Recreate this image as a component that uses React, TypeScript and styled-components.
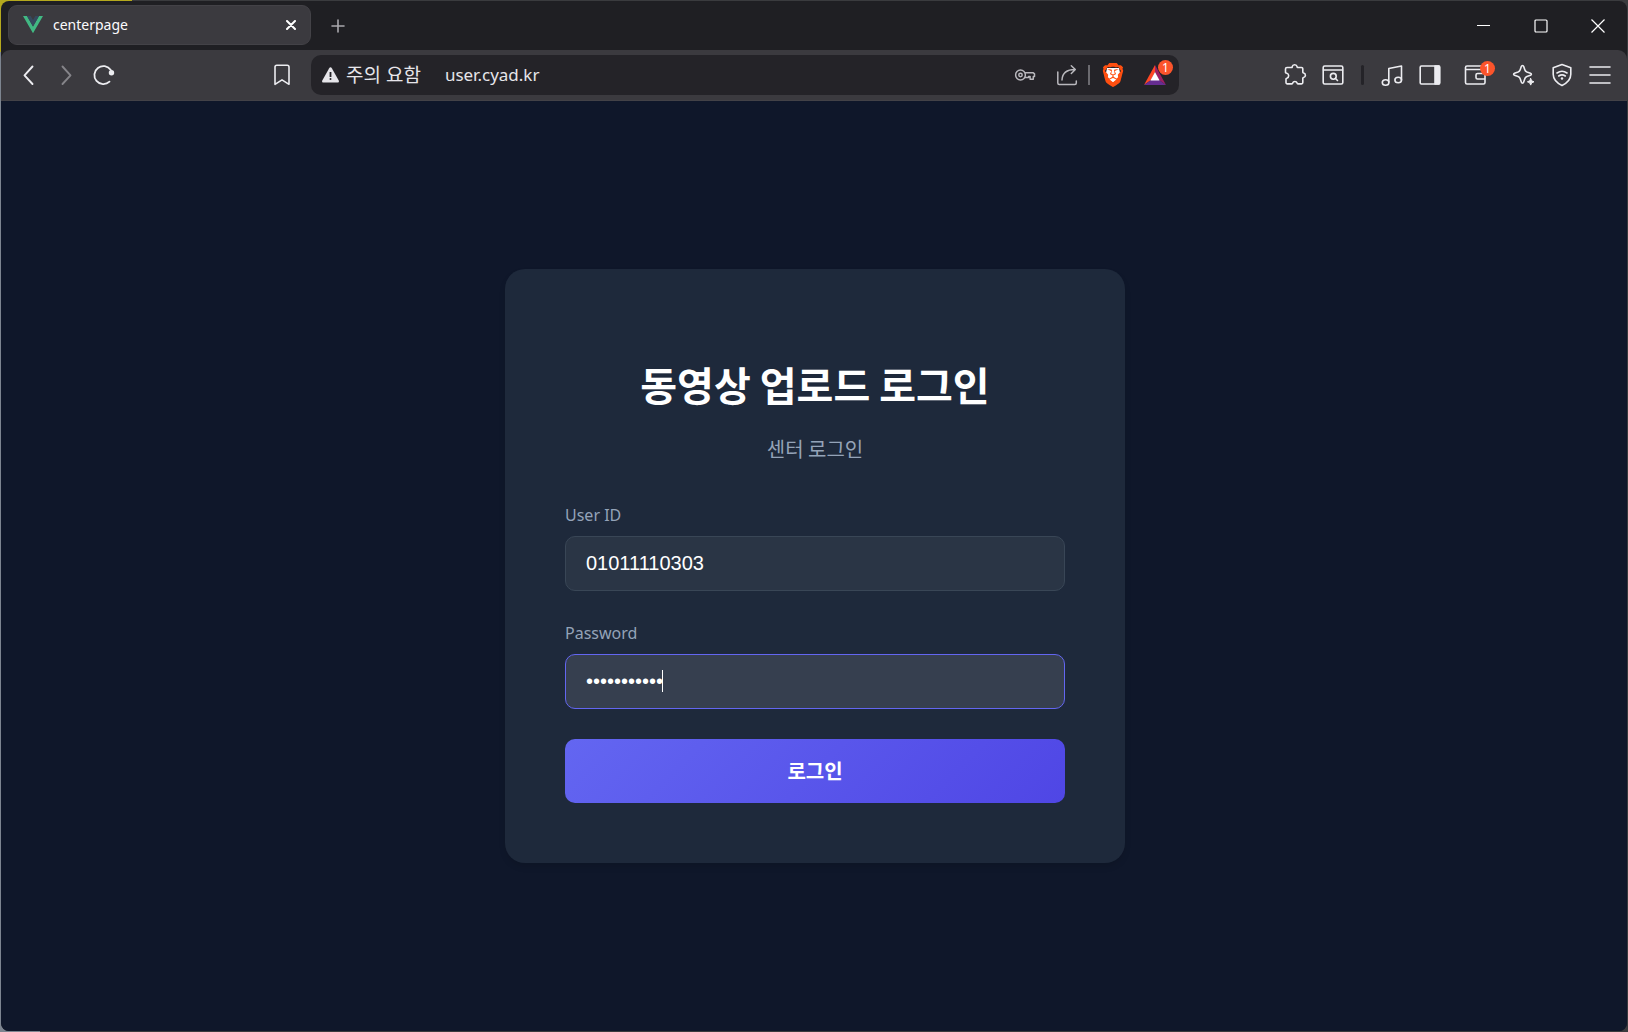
import React, { useState } from "react";
import styled, { createGlobalStyle, css } from "styled-components";
import { SiBrave } from "react-icons/si";

const GlobalStyle = createGlobalStyle`
  * { box-sizing: border-box; }
  body { margin: 0; background: #0f172a; }
  button, input { font: inherit; }
`;

const uiFont = `"Noto Sans", "Noto Sans CJK KR", sans-serif`;

const Desktop = styled.div`
  display: flex;
  min-height: 100vh;
  padding: 1px;
  background:
    linear-gradient(90deg, #b5a91e 0 132px, transparent 132px) top / 100% 52px no-repeat,
    linear-gradient(90deg, #7d8590 0 40px, #3a3b3e 40px);
  font-family: ${uiFont};
`;

const BrowserWindow = styled.div`
  flex: 1;
  min-width: 0;
  display: flex;
  flex-direction: column;
  overflow: hidden;
  border-radius: 8px;
  background: #1f1f23;
`;

const TabStrip = styled.header`
  display: flex;
  align-items: center;
  height: 49px;
  padding: 0 1px 0 7px;
`;

const Tab = styled.div`
  display: flex;
  align-items: center;
  width: 303px;
  height: 40px;
  margin-bottom: 2px;
  padding: 0 9px 0 14px;
  gap: 10px;
  border: 1px solid #434247;
  border-radius: 9px;
  background: #3b3a3f;
  color: #fbfbfd;
  font-size: 14px;
  line-height: 20px;
`;

const TabTitle = styled.span`
  flex: 1;
`;

const plainButton = css`
  display: inline-flex;
  align-items: center;
  justify-content: center;
  padding: 0;
  border: 0;
  background: transparent;
  cursor: pointer;
`;

const TabButton = styled.button`
  ${plainButton}
  width: 20px;
  height: 20px;
  color: #fff;
`;

const NewTabButton = styled.button`
  ${plainButton}
  width: 36px;
  height: 36px;
  margin-left: 9px;
  color: #a9a8ad;
`;

const WindowControls = styled.div`
  display: flex;
  align-self: stretch;
  margin-left: auto;
`;

const WindowButton = styled.button`
  ${plainButton}
  width: 57px;
  color: #fff;
`;

const Toolbar = styled.nav`
  display: grid;
  grid-template-columns: 310px minmax(0, 1fr) 448px;
  align-items: center;
  height: 51px;
  border-bottom: 1px solid #434247;
  border-radius: 9px 9px 0 0;
  background: #3b3a3f;
`;

const ToolGroup = styled.div<{ $end?: boolean }>`
  display: flex;
  align-items: center;
  gap: 2px;
  padding: ${(p) => (p.$end ? "0 9px 0 0" : "0 11px 0 9px")};
  justify-content: ${(p) => (p.$end ? "flex-end" : "flex-start")};
`;

const ToolButton = styled.button<{ $dim?: boolean; $pushRight?: boolean; $wide?: boolean }>`
  ${plainButton}
  position: relative;
  width: ${(p) => (p.$wide ? 50 : 36)}px;
  height: 36px;
  margin-left: ${(p) => (p.$pushRight ? "auto" : 0)};
  margin-right: ${(p) => (p.$wide ? 4 : 0)}px;
  color: ${(p) => (p.$dim ? "#858489" : "#ececf0")};
`;

const Divider = styled.span`
  width: 3px;
  height: 20px;
  margin: 0 8px;
  border-radius: 2px;
  background: #242328;
`;

const AddressBar = styled.div`
  display: flex;
  align-items: center;
  height: 40px;
  padding: 0 3px 0 10px;
  border-radius: 10px;
  background: #242328;
  color: #e6e5ea;
`;

const SecurityButton = styled.button`
  ${plainButton}
  gap: 6px;
  color: #e6e5ea;
  font-size: 19px;
  line-height: 28px;
`;

const UrlInput = styled.input`
  flex: 1;
  min-width: 0;
  height: 24px;
  margin-left: 24px;
  padding: 0;
  border: 0;
  outline: 0;
  background: transparent;
  color: #e6e5ea;
  font-size: 17px;
  line-height: 24px;
`;

const AddressActions = styled.div`
  display: flex;
  align-items: center;
`;

const AddressButton = styled.button`
  ${plainButton}
  position: relative;
  width: 42px;
  height: 36px;
  color: #b9b8bd;
`;

const AddressDivider = styled.span`
  width: 2px;
  height: 20px;
  margin-right: 2px;
  background: #6b6a6f;
`;

const Badge = styled.span<{ $wallet?: boolean }>`
  position: absolute;
  top: ${(p) => (p.$wallet ? 4 : 3)}px;
  right: ${(p) => (p.$wallet ? 5 : 3)}px;
  width: 15px;
  height: 15px;
  border-radius: 50%;
  background: #fb542b;
  color: #fff;
  font-size: 12px;
  line-height: 15px;
  text-align: center;
`;

const Page = styled.main`
  flex: 1;
  display: flex;
  align-items: center;
  justify-content: center;
  padding: 24px 24px 24px 26px;
  background: #0f172a;
`;

const LoginCard = styled.section`
  width: 100%;
  max-width: 620px;
  padding: 60px;
  border-radius: 20px;
  background: #1e293b;
  box-shadow: 0 4px 6px rgba(0, 0, 0, 0.1);
`;

const CardHeader = styled.div`
  padding: 30px 0 40px;
  text-align: center;
`;

const Title = styled.h1`
  margin: 0 0 26px;
  color: #fff;
  font: 700 40px/50px "Noto Sans CJK KR", sans-serif;
`;

const Subtitle = styled.p`
  margin: 0;
  color: #94a3b8;
  font: 400 20px/28px "Noto Sans CJK KR", sans-serif;
`;

const LoginForm = styled.form`
  display: flex;
  flex-direction: column;
  gap: 30px;
`;

const Field = styled.div`
  position: relative;
  display: flex;
  flex-direction: column;
  gap: 8px;
`;

const FieldLabel = styled.label`
  color: #94a3b8;
  font-size: 16px;
  line-height: 25px;
`;

const TextInput = styled.input<{ $active?: boolean }>`
  width: 100%;
  height: 55px;
  padding: 0 20px;
  border: 1px solid ${(p) => (p.$active ? "#6366f1" : "#394656")};
  border-radius: 10px;
  outline: 0;
  background: ${(p) => (p.$active ? "#363f4f" : "#2a3545")};
  color: #fff;
  caret-color: transparent;
  font: 400 20px/24px "Liberation Sans", Arial, sans-serif;
`;

const Caret = styled.span`
  position: absolute;
  left: 97px;
  bottom: 17px;
  width: 1px;
  height: 22px;
  background: #fff;
  pointer-events: none;
`;

const SubmitButton = styled.button`
  height: 64px;
  border: 0;
  border-radius: 10px;
  background: linear-gradient(135deg, #6366f1, #4f46e5);
  color: #fff;
  font: 700 20px/28px "Noto Sans CJK KR", sans-serif;
  cursor: pointer;
`;

type IconProps = { size?: number; stroke?: number; children: React.ReactNode };

function Icon({ size = 24, stroke = 1.6, children }: IconProps) {
  return (
    <svg
      width={size}
      height={size}
      viewBox={`0 0 ${size} ${size}`}
      fill="none"
      stroke="currentColor"
      strokeWidth={stroke}
      strokeLinecap="round"
      strokeLinejoin="round"
      aria-hidden="true"
    >
      {children}
    </svg>
  );
}

function BrowserTabs() {
  return (
    <TabStrip>
      <Tab>
        <svg width="20" height="18" viewBox="0 0 20 18" aria-hidden="true">
          <path d="M0 0h4l6 10.4L16 0h4L10 17.3z" fill="#41b883" />
          <path d="M4 0h3.7L10 4l2.3-4H16l-6 10.4z" fill="#35495e" />
        </svg>
        <TabTitle>centerpage</TabTitle>
        <TabButton aria-label="Close tab">
          <Icon size={10} stroke={2}>
            <path d="M1 1l8 8M9 1L1 9" />
          </Icon>
        </TabButton>
      </Tab>
      <NewTabButton aria-label="New tab">
        <Icon size={14} stroke={1.6}>
          <path d="M7 1v12M1 7h12" />
        </Icon>
      </NewTabButton>
      <WindowControls>
        <WindowButton aria-label="Minimize">
          <svg width="13" height="13" aria-hidden="true">
            <path d="M0 6.5h13" stroke="currentColor" />
          </svg>
        </WindowButton>
        <WindowButton aria-label="Maximize">
          <svg width="14" height="14" aria-hidden="true">
            <rect x="1" y="1" width="12" height="12" rx="1" fill="none" stroke="currentColor" strokeWidth="1.2" />
          </svg>
        </WindowButton>
        <WindowButton aria-label="Close">
          <svg width="14" height="14" aria-hidden="true">
            <path d="M.5.5l13 13M13.5.5l-13 13" stroke="currentColor" strokeWidth="1.2" />
          </svg>
        </WindowButton>
      </WindowControls>
    </TabStrip>
  );
}

function BrowserToolbar() {
  return (
    <Toolbar>
      <ToolGroup>
        <ToolButton aria-label="Back">
          <Icon stroke={1.9}><path d="M16.5 3.500L8.500 12.300l8 8.700" /></Icon>
        </ToolButton>
        <ToolButton aria-label="Forward" $dim>
          <Icon stroke={1.9}><path d="M8.500 3.500l8 8.800-8 8.700" /></Icon>
        </ToolButton>
        <ToolButton aria-label="Reload">
          <Icon stroke={1.8}>
            <path d="M17.500 18.700A9 9 0 1 1 18.800 7" />
            <circle cx="19.500" cy="9.800" r="2.700" fill="currentColor" stroke="none" />
          </Icon>
        </ToolButton>
        <ToolButton aria-label="Bookmark" $pushRight>
          <Icon>
            <path d="M5 4a1.800 1.800 0 0 1 1.800-1.800h10.400A1.800 1.800 0 0 1 19 4v17.300l-7-4.500-7 4.500z" />
          </Icon>
        </ToolButton>
      </ToolGroup>

      <AddressBar>
        <SecurityButton>
          <svg width="19" height="18" viewBox="0 0 19 18" aria-hidden="true">
            <path d="M8 2.500q1.500-2.400 3 0l6.600 11.700q1.100 2.300-1.300 2.300H2.700q-2.400 0-1.300-2.300z" fill="currentColor" />
            <path d="M9.500 6v5" stroke="#242328" strokeWidth="1.800" />
            <circle cx="9.500" cy="13" r="1" fill="#242328" />
          </svg>
          주의 요함
        </SecurityButton>
        <UrlInput aria-label="Address" defaultValue="user.cyad.kr" />
        <AddressActions>
          <AddressButton aria-label="Passwords">
            <Icon size={22} stroke={1.5}>
              <circle cx="6.500" cy="11" r="4.900" />
              <circle cx="6.500" cy="11" r="1.700" />
              <path d="M11 8.800h8.300l1.200 1v2.700h-1.200v2.700h-3.200v-2.700h-1.500v1h-3.700" />
            </Icon>
          </AddressButton>
          <AddressButton aria-label="Share">
            <Icon size={22} stroke={1.5}>
              <path d="M1.800 8v11a1.500 1.500 0 0 0 1.500 1.500h15.500a1.500 1.500 0 0 0 1.500-1.500v-2M6 16c.3-6.500 4.500-10.500 13-10.500M15.300 1.800l4 3.700-4 4" />
            </Icon>
          </AddressButton>
          <AddressDivider />
          <AddressButton aria-label="Brave Shields">
            <svg width="24" height="24" viewBox="0 0 24 24" aria-hidden="true">
              <path d="M6 5h12l1 5-3 7-4 3-4-3-3-7z" fill="#fff" />
              <SiBrave size={24} color="#ff4f10" />
            </svg>
          </AddressButton>
          <AddressButton aria-label="Brave Rewards">
            <svg width="22" height="20" viewBox="0 0 22 20" aria-hidden="true">
              <path d="M11 0L0 20l7-5 4-8z" fill="#ff4724" />
              <path d="M11 0l11 20-7-5-4-8z" fill="#9e1f63" />
              <path d="M0 20h22l-7-5H7z" fill="#662d91" />
              <path d="M11 7l4.600 8.500H6.400z" fill="#fff" />
            </svg>
            <Badge>1</Badge>
          </AddressButton>
        </AddressActions>
      </AddressBar>

      <ToolGroup $end>
        <ToolButton aria-label="Extensions">
          <Icon>
            <path d="M4 4.500h4.700c.4 0 .6-.4.5-.8a2.500 2.500 0 0 1 4.900 0c0 .5.200.8.600.8h3.800c.8 0 1.300.5 1.300 1.300v3.400c0 .5.300.7.800.8a2.300 2.300 0 0 1 0 4.500c-.5.100-.8.300-.8.800v4.300c0 .8-.5 1.300-1.300 1.300h-3.600c-.5 0-.7-.3-.8-.8a2.300 2.300 0 0 0-4.400 0c-.1.500-.4.800-.8.800H4.300c-.8 0-1.300-.5-1.300-1.300v-3.500c0-.5.300-.7.800-.8a2.600 2.600 0 0 0 0-5C3.300 10.200 2.500 10 2.500 9.500V6c0-.9.600-1.500 1.500-1.500z" />
          </Icon>
        </ToolButton>
        <ToolButton aria-label="Search tabs">
          <Icon>
            <rect x="2.200" y="3" width="19.600" height="18" rx="1.500" />
            <path d="M2.500 7h19M14.500 15.500l2 2" />
            <circle cx="12.300" cy="13.300" r="2.900" />
          </Icon>
        </ToolButton>
        <Divider />
        <ToolButton aria-label="Media">
          <Icon>
            <path d="M8.800 19V5.500L21.500 3v14M8.800 8.500" />
            <ellipse cx="5.600" cy="19.500" rx="3.300" ry="2.700" />
            <ellipse cx="18.200" cy="17" rx="3.300" ry="2.700" />
          </Icon>
        </ToolButton>
        <ToolButton aria-label="Side panel">
          <Icon>
            <rect x="2.200" y="3" width="19.600" height="18" rx="1.200" />
            <path d="M17 3h4v18h-4z" fill="currentColor" />
          </Icon>
        </ToolButton>
        <ToolButton aria-label="Wallet" $wide>
          <Icon>
            <path d="M22 8V6.500H2.500V4.500A1.500 1.500 0 0 1 4 3h15M2.500 6v13.500A1.500 1.500 0 0 0 4 21h16.500a1.500 1.500 0 0 0 1.500-1.500V16M22 10.500h-7.500A1.500 1.500 0 0 0 13 12v2.500a1.500 1.500 0 0 0 1.500 1.500H22z" />
          </Icon>
          <Badge $wallet>1</Badge>
        </ToolButton>
        <ToolButton aria-label="Leo AI">
          <Icon>
            <path d="M10.500 2.500c.7 0 1 .4 1.200 1l1.100 3.300c.4 1.200 1 1.800 2.100 2.200l3.600 1.200c1.200.4 1.200 1.700 0 2.100l-3.600 1.200c-1.100.4-1.700 1-2.100 2.200l-1.200 3.600c-.4 1.200-1.800 1.200-2.200 0l-1.200-3.600c-.4-1.200-1-1.800-2.100-2.200l-3.600-1.200c-1.200-.4-1.200-1.700 0-2.100L6.100 9c1.100-.4 1.700-1 2.100-2.200l1.100-3.300c.2-.6.500-1 1.200-1z" />
            <path d="M18.700 15.500l1 2.300 2.300 1-2.300 1-1 2.300-1-2.300-2.300-1 2.300-1z" fill="currentColor" stroke="currentColor" strokeWidth="1" />
          </Icon>
        </ToolButton>
        <ToolButton aria-label="VPN">
          <Icon>
            <path d="M12 1.500l8.800 3.300v6.500c0 5.200-3.600 8.700-8.800 11.200-5.200-2.500-8.800-6-8.800-11.200V4.800z" />
            <path d="M7 10q5-3.500 10 0M8.700 13q3.300-2.300 6.600 0" />
            <circle cx="12" cy="15.500" r="1.200" fill="currentColor" stroke="none" />
          </Icon>
        </ToolButton>
        <ToolButton aria-label="Menu">
          <Icon stroke={1.6}>
            <path d="M2 4h20M2 12h20M2 20h20" />
          </Icon>
        </ToolButton>
      </ToolGroup>
    </Toolbar>
  );
}

function Login() {
  const [userId, setUserId] = useState("01011110303");
  const [password, setPassword] = useState("01011110303");

  return (
    <LoginCard>
      <CardHeader>
        <Title>동영상 업로드 로그인</Title>
        <Subtitle>센터 로그인</Subtitle>
      </CardHeader>
      <LoginForm onSubmit={(event) => event.preventDefault()}>
        <Field>
          <FieldLabel htmlFor="user-id">User ID</FieldLabel>
          <TextInput id="user-id" value={userId} onChange={(e) => setUserId(e.target.value)} />
        </Field>
        <Field>
          <FieldLabel htmlFor="password">Password</FieldLabel>
          <TextInput
            id="password"
            type="password"
            $active
            value={password}
            onChange={(e) => setPassword(e.target.value)}
          />
          <Caret />
        </Field>
        <SubmitButton type="submit">로그인</SubmitButton>
      </LoginForm>
    </LoginCard>
  );
}

export default function App() {
  return (
    <>
      <GlobalStyle />
      <Desktop>
        <BrowserWindow>
          <BrowserTabs />
          <BrowserToolbar />
          <Page>
            <Login />
          </Page>
        </BrowserWindow>
      </Desktop>
    </>
  );
}
